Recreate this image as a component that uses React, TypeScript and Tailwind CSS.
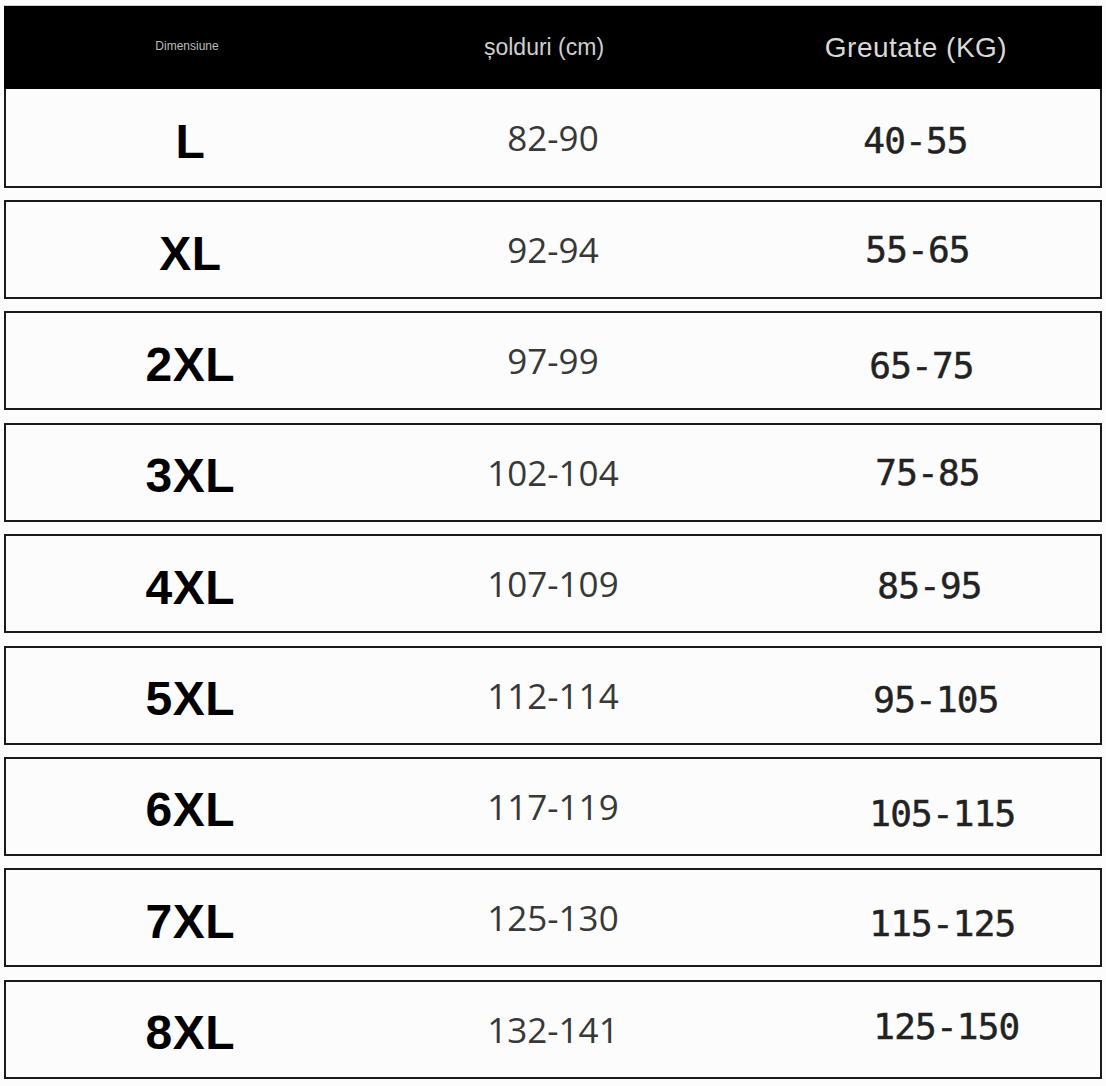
const rows = [
  { size: "L", hips: "82-90", weight: "40-55", dx: -7, dy: 3 },
  { size: "XL", hips: "92-94", weight: "55-65", dx: -5, dy: 0 },
  { size: "2XL", hips: "97-99", weight: "65-75", dx: -1, dy: 5 },
  { size: "3XL", hips: "102-104", weight: "75-85", dx: 5, dy: 1 },
  { size: "4XL", hips: "107-109", weight: "85-95", dx: 7, dy: 2 },
  { size: "5XL", hips: "112-114", weight: "95-105", dx: 3, dy: 5 },
  { size: "6XL", hips: "117-119", weight: "105-115", dx: -1, dy: 8 },
  { size: "7XL", hips: "125-130", weight: "115-125", dx: -1, dy: 6 },
  { size: "8XL", hips: "132-141", weight: "125-150", dx: 3, dy: -2 },
];

type Row = (typeof rows)[number];

function SizeRow({ row, first }: { row: Row; first?: boolean }) {
  return (
    <div
      className={
        "grid h-[99px] grid-cols-3 items-center border-2 border-[#1a1a1a] bg-[#fcfcfc] " +
        (first ? "border-t-0" : "")
      }
    >
      <div className="pt-2 pl-1 text-center font-['Liberation_Sans',Arial,sans-serif] text-[48px] font-bold leading-none tracking-[0.5px] text-black">
        {row.size}
      </div>
      <div className="text-center font-['Open_Sans',sans-serif] text-[35px] leading-none text-[#383838]">
        {row.hips}
      </div>
      <div className="pl-[135px] font-['DejaVu_Sans_Mono',monospace] text-[36px] leading-none tracking-[-0.8px] text-[#222] [-webkit-text-stroke:0.5px_#222]">
        <span className="inline-block" style={{ transform: `translate(${row.dx}px, ${row.dy}px)` }}>
          {row.weight}
        </span>
      </div>
    </div>
  );
}

export default function App() {
  return (
    <div className="min-h-[1086px] w-full bg-[#fcfcfc] px-[4px] pt-[5px] font-['Liberation_Sans',Arial,sans-serif]">
      {/* header + first row share the outline */}
      <div className="grid h-[84px] grid-cols-3 items-center border-t border-[#cfcfcf] bg-black">
        <div className="-mt-1 text-center text-[12px] text-[#bdbdbd]">Dimensiune</div>
        <div className="pr-[18px] text-center text-[23px] text-[#cfcfcf]">șolduri (cm)</div>
        <div className="pr-[6px] text-center text-[28px] tracking-[0.5px] text-[#d9d9d9]">Greutate (KG)</div>
      </div>
      <SizeRow row={rows[0]} first />

      <div className="mt-[12px] flex flex-col gap-[12.4px]">
        {rows.slice(1).map((row) => (
          <SizeRow key={row.size} row={row} />
        ))}
      </div>
    </div>
  );
}
